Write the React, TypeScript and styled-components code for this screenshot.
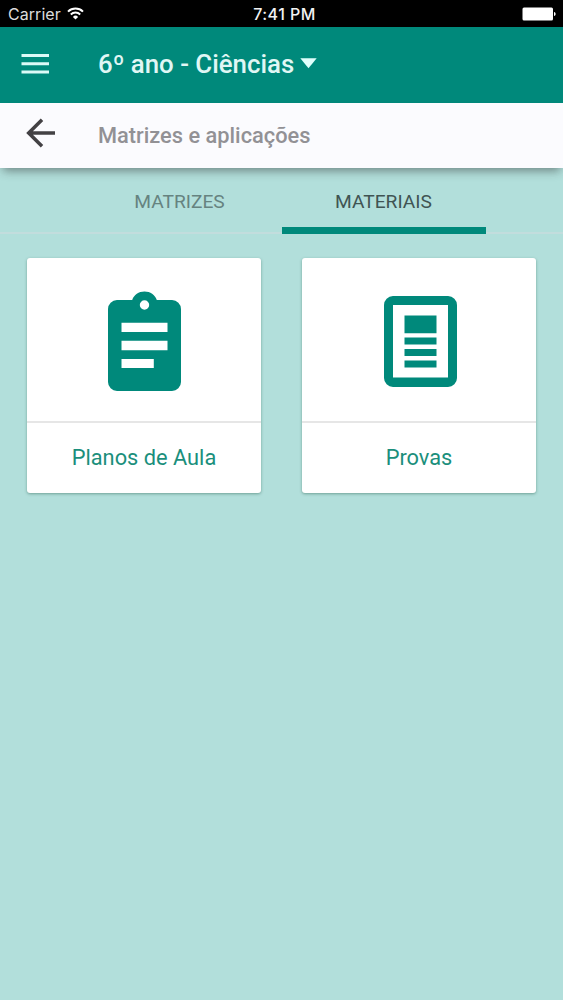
import React from "react";
import styled, { createGlobalStyle } from "styled-components";

const GlobalStyle = createGlobalStyle`
  * { box-sizing: border-box; }
  body { margin: 0; background: #b2dfdb; font-family: Roboto, sans-serif; }
`;

const Screen = styled.div`
  width: 563px;
  height: 1000px;
  display: flex;
  flex-direction: column;
  background: #b2dfdb;
  overflow: hidden;
`;

const StatusBar = styled.div`
  height: 27px;
  flex: none;
  display: grid;
  grid-template-columns: 1fr auto 1fr;
  align-items: center;
  padding: 1px 7px 0 8px;
  background: #000;
  color: #fff;
  font-family: Inter, sans-serif;
  font-size: 16px;
  line-height: 20px;
`;

const Carrier = styled.div`
  display: flex;
  align-items: center;
  gap: 6px;
  color: #dcdcdc;
  letter-spacing: 0.05px;

  svg {
    margin-bottom: 1px;
  }
`;

const Clock = styled.div`
  color: #f2f2f2;
  font-weight: 500;
  padding-left: 5px;
  letter-spacing: 0.45px;
`;

const BatterySlot = styled.div`
  display: flex;
  justify-content: flex-end;
`;

const AppBar = styled.header`
  height: 76px;
  flex: none;
  display: flex;
  align-items: center;
  padding-left: 21px;
  background: #00897b;
`;

const IconSlot = styled.div<{ $width: number; $lift: number }>`
  width: ${(p) => p.$width}px;
  padding-bottom: ${(p) => p.$lift}px;
  flex: none;
  display: flex;
`;

const Course = styled.h1`
  margin: 0;
  padding-bottom: 2px;
  display: flex;
  align-items: center;
  gap: 6px;
  color: #e0f7f5;
  font-size: 25.8px;
  font-weight: 500;
  line-height: 30px;

  svg {
    margin-bottom: 1px;
  }
`;

const SubBar = styled.div`
  height: 65px;
  flex: none;
  display: flex;
  align-items: center;
  padding-left: 26px;
  background: #fbfbfe;
  box-shadow: 0 6px 9px -3px rgba(30, 30, 30, 0.45);
`;

const Subtitle = styled.h2`
  margin: 0;
  padding-top: 1px;
  color: #929195;
  font-size: 21.8px;
  font-weight: 500;
  line-height: 28px;
`;

const Tabs = styled.nav`
  height: 66px;
  flex: none;
  display: flex;
  padding-left: 77.5px;
  box-shadow: inset 0 -2px 0 #c2dddd;
`;

const Tab = styled.div<{ $active?: boolean }>`
  width: 204px;
  display: flex;
  align-items: center;
  justify-content: center;
  padding-top: ${(p) => (p.$active ? 8 : 1)}px;
  border-bottom: ${(p) => (p.$active ? "7px solid #00897b" : "none")};
  color: ${(p) => (p.$active ? "#405453" : "#668380")};
  font-size: 19.2px;
  line-height: 24px;
`;

const Cards = styled.main`
  display: flex;
  gap: 41px;
  padding: 24px 27px;
`;

const Card = styled.section`
  width: 234px;
  height: 235px;
  display: flex;
  flex-direction: column;
  background: #fff;
  border-radius: 3px;
  box-shadow: 0 1px 3px rgba(0, 60, 40, 0.38);
`;

const CardPicture = styled.div<{ $top: number; $shift?: number }>`
  height: 165px;
  display: flex;
  justify-content: center;
  align-items: flex-start;
  padding-top: ${(p) => p.$top}px;
  padding-left: ${(p) => p.$shift ?? 0}px;
  border-bottom: 2px solid #e6e6e6;
`;

const CardLabel = styled.div`
  flex: 1;
  display: flex;
  align-items: center;
  justify-content: center;
  padding-bottom: 1px;
  color: #1b8f7c;
  font-size: 21.8px;
  line-height: 28px;
`;

const WifiIcon = () => (
  <svg width="17" height="13" viewBox="0 0 17 13" fill="none" stroke="#fff">
    <path d="M1 4.6a10.8 10.8 0 0 1 15 0" strokeWidth="2" />
    <path d="M3.8 7.5a6.8 6.8 0 0 1 9.4 0" strokeWidth="2" />
    <path d="M5.9 9.9a3.7 3.7 0 0 1 5.2 0L8.5 12.6z" fill="#fff" stroke="none" />
  </svg>
);

const BatteryIcon = () => (
  <svg width="34" height="14" viewBox="0 0 34 14" fill="#fff">
    <rect x="0.5" y="0.5" width="30.5" height="13" rx="1.5" />
    <path d="M32 5c1.2.3 1.6 1 1.6 2s-.4 1.700-1.600 2z" />
  </svg>
);

const MenuIcon = () => (
  <svg width="28" height="21" viewBox="0 0 28 21" fill="#dcfaf7">
    <path d="M.5 1h27.500v3H.5zM.5 9.200h27.500v3H.5zM.5 17.500h27.500v3H.5z" />
  </svg>
);

const CaretIcon = () => (
  <svg width="17" height="11" viewBox="0 0 17 11" fill="#e0fffc">
    <path d="M.3.300h16.400L8.500 10.300z" />
  </svg>
);

const BackIcon = () => (
  <svg width="30" height="30" viewBox="0 0 30 30" fill="none" stroke="#434144" strokeWidth="3.500">
    <path d="M29 15H3M16 1.800L2.700 15 16 28.200" />
  </svg>
);

const ClipboardIcon = () => (
  <svg width="73" height="100" viewBox="0 0 73 100">
    <path
      fill="#00897b"
      fillRule="evenodd"
      d="M9 9h15.200C26 3.700 30.700 0.500 36.500 0.500S47 3.700 48.800 9H64a9 9 0 0 1 9 9v73a9 9 0 0 1-9 9H9a9 9 0 0 1-9-9V18a9 9 0 0 1 9-9zM36.500 9.300a4.700 4.700 0 1 0 0 9.400 4.700 4.700 0 0 0 0-9.400zM13.500 31.700v9.300h46v-9.300zM13.500 49.800v9.400h46v-9.400zM13.500 68v9h32.300v-9z"
    />
  </svg>
);

const PaperIcon = () => (
  <svg width="73" height="91" viewBox="0 0 73 91" fill="#00897b">
    <path
      fillRule="evenodd"
      d="M9 0h55a9 9 0 0 1 9 9v73a9 9 0 0 1-9 9H9a9 9 0 0 1-9-9V9a9 9 0 0 1 9-9zM9 9v72.500h55V9z"
    />
    <path d="M20.500 19.500h32v17.800h-32zM20.500 41.400h32v7h-32zM20.500 53h32v7h-32zM20.500 64.500h32v7h-32z" />
  </svg>
);

export default function App() {
  return (
    <Screen>
      <GlobalStyle />
      <StatusBar>
        <Carrier>
          <span>Carrier</span>
          <WifiIcon />
        </Carrier>
        <Clock>7:41 PM</Clock>
        <BatterySlot>
          <BatteryIcon />
        </BatterySlot>
      </StatusBar>
      <AppBar>
        <IconSlot $width={77} $lift={3}>
          <MenuIcon />
        </IconSlot>
        <Course>
          <span>6º ano - Ciências</span>
          <CaretIcon />
        </Course>
      </AppBar>
      <SubBar>
        <IconSlot $width={72} $lift={5}>
          <BackIcon />
        </IconSlot>
        <Subtitle>Matrizes e aplicações</Subtitle>
      </SubBar>
      <Tabs>
        <Tab>MATRIZES</Tab>
        <Tab $active>MATERIAIS</Tab>
      </Tabs>
      <Cards>
        <Card>
          <CardPicture $top={33}>
            <ClipboardIcon />
          </CardPicture>
          <CardLabel>Planos de Aula</CardLabel>
        </Card>
        <Card>
          <CardPicture $top={38} $shift={2}>
            <PaperIcon />
          </CardPicture>
          <CardLabel>Provas</CardLabel>
        </Card>
      </Cards>
    </Screen>
  );
}
